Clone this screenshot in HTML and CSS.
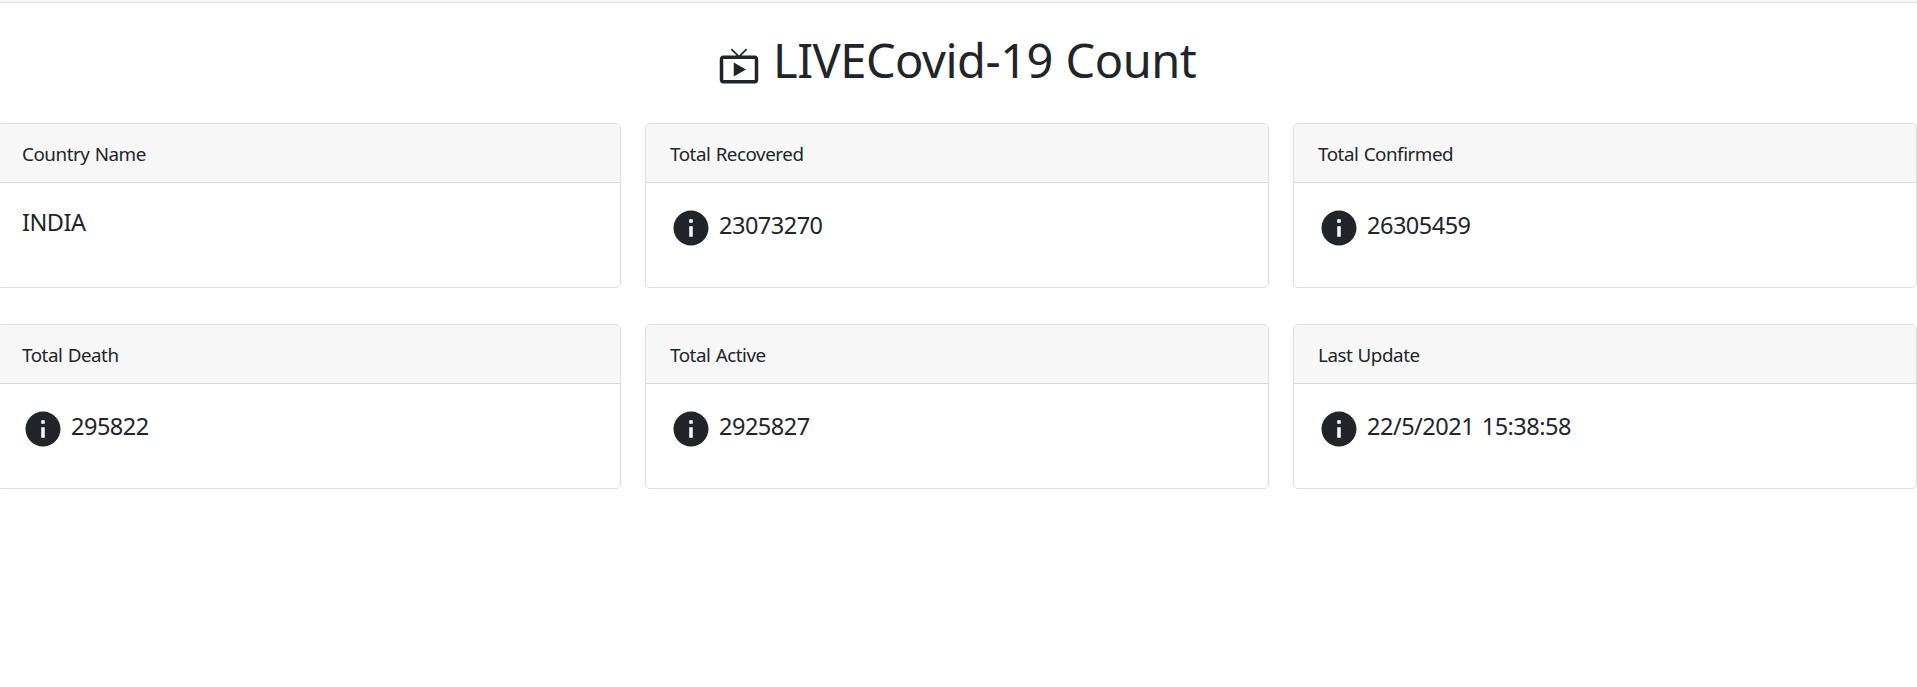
FILE: index.html
```html
<!DOCTYPE html>
<html lang="en">
<head>
<meta charset="utf-8">
<title>Covid-19 Count</title>
<link rel="stylesheet" href="styles.css">
</head>
<body>
<svg class="sprite" aria-hidden="true">
  <symbol id="info" viewBox="0 0 24 24"><path d="M12 2C6.48 2 2 6.48 2 12s4.48 10 10 10 10-4.48 10-10S17.52 2 12 2zm1 15h-2v-6h2v6zm0-8h-2V7h2v2z"/></symbol>
</svg>
<div class="topbar"></div>
<h1 class="title">
  <svg class="icon tv" viewBox="0 0 24 24"><path d="M21 6h-7.59l3.29-3.29L16 2l-4 4-4-4-.71.71L10.59 6H3c-1.1 0-2 .89-2 2v12c0 1.1.9 2 2 2h18c1.1 0 2-.9 2-2V8c0-1.11-.9-2-2-2zm0 14H3V8h18v12zM9 10v8l7-4z"/></svg>
  <span>LIVECovid-19 Count</span>
</h1>
<main class="grid">
  <section class="card"><div class="head">Country Name</div><div class="body plain"><span class="value">INDIA</span></div></section>
  <section class="card"><div class="head">Total Recovered</div><div class="body"><svg class="icon"><use href="#info"/></svg><span class="value">23073270</span></div></section>
  <section class="card"><div class="head">Total Confirmed</div><div class="body"><svg class="icon"><use href="#info"/></svg><span class="value">26305459</span></div></section>
  <section class="card"><div class="head">Total Death</div><div class="body"><svg class="icon"><use href="#info"/></svg><span class="value">295822</span></div></section>
  <section class="card"><div class="head">Total Active</div><div class="body"><svg class="icon"><use href="#info"/></svg><span class="value">2925827</span></div></section>
  <section class="card"><div class="head">Last Update</div><div class="body"><svg class="icon"><use href="#info"/></svg><span class="value">22/5/2021 15:38:58</span></div></section>
</main>
</body>
</html>
```
FILE: styles.css
```css
* { box-sizing: border-box; }
html { overflow: hidden; }
body {
  margin: 0;
  background: #fff;
  color: #212529;
  font-family: "Segoe UI", "Noto Sans", sans-serif;
}
.sprite { display: none; }
.topbar { height: 3px; background: #f7f7f7; border-bottom: 1px solid #dfdfdf; }
.title {
  display: flex;
  height: 120px;
  margin: 0;
  padding: 28px 0 0 718px;
  font-size: 47px;
  font-weight: 400;
  line-height: 58px;
  letter-spacing: -0.5px;
  word-spacing: 1px;
  white-space: nowrap;
}
.icon { width: 42px; height: 42px; flex: none; fill: currentColor; }
.tv { margin: 14px 13px 0 0; }
.grid {
  display: grid;
  grid-template-columns: repeat(3, 624px);
  column-gap: 24px;
  row-gap: 36px;
  margin-left: -3px;
}
.card {
  height: 165px;
  border: 1px solid #dfdfdf;
  border-radius: 5px;
  overflow: hidden;
}
.head {
  height: 59px;
  padding: 0 24px;
  background: #f7f7f7;
  border-bottom: 1px solid #d8d8d8;
  font-size: 18.8px;
  line-height: 60px;
  letter-spacing: -0.45px;
  word-spacing: 0.8px;
}
.body { display: flex; padding: 24px; }
.value {
  margin-left: 7px;
  font-size: 23.5px;
  line-height: 36px;
  letter-spacing: -0.5px;
  word-spacing: 2px;
}
.plain .value { margin: -3px 0 0; }
```
